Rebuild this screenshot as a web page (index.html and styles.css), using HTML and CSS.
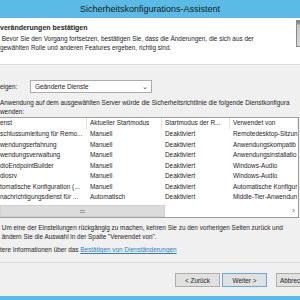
FILE: index.html
```html
<!DOCTYPE html>
<html>
<head>
    <meta charset="UTF-8">
    <title>Sicherheitskonfigurations-Assistent</title>
    <link rel="stylesheet" href="styles.css">
</head>
<body>
    <div class="window">
        <div class="titlebar">Sicherheitskonfigurations-Assistent</div>

        <div class="wizard-header">
            <div class="header-text">
                <h1>veränderungen bestätigen</h1>
                <p>&nbsp;Bevor Sie den Vorgang fortsetzen, bestätigen Sie, dass die Änderungen, die sich aus der<br>gewählten Rolle und anderen Features ergeben, richtig sind.</p>
            </div>
            <div class="header-icon"></div>
        </div>

        <div class="wizard-body">
            <div class="filter-row">
                <label>eigen:</label>
                <div class="combo">
                    <span>Geänderte Dienste</span>
                    <span class="combo-arrow">&#8964;</span>
                </div>
            </div>

            <p class="intro">Anwendung auf dem ausgewählten Server würde die Sicherheitsrichtlinie die folgende Dienstkonfigura<br>wenden:</p>

            <div class="service-table">
                <div class="table-head">
                    <div class="cell">enst</div>
                    <div class="cell">Aktueller Startmodus</div>
                    <div class="cell">Startmodus der R...</div>
                    <div class="cell">Verwendet von</div>
                </div>
                <div class="table-rows">
                    <div class="row">
                        <div class="cell">schlussumleitung für Remo...</div>
                        <div class="cell">Manuell</div>
                        <div class="cell">Deaktiviert</div>
                        <div class="cell">Remotedesktop-Sitzun</div>
                    </div>
                    <div class="row">
                        <div class="cell">wendungserfahrung</div>
                        <div class="cell">Manuell</div>
                        <div class="cell">Deaktiviert</div>
                        <div class="cell">Anwendungskompatib</div>
                    </div>
                    <div class="row">
                        <div class="cell">wendungsverwaltung</div>
                        <div class="cell">Manuell</div>
                        <div class="cell">Deaktiviert</div>
                        <div class="cell">Anwendungsinstallatio</div>
                    </div>
                    <div class="row">
                        <div class="cell">dioEndpointBuilder</div>
                        <div class="cell">Manuell</div>
                        <div class="cell">Deaktiviert</div>
                        <div class="cell">Windows-Audio</div>
                    </div>
                    <div class="row">
                        <div class="cell">diosrv</div>
                        <div class="cell">Manuell</div>
                        <div class="cell">Deaktiviert</div>
                        <div class="cell">Windows-Audio</div>
                    </div>
                    <div class="row">
                        <div class="cell">tomatische Konfiguration (...</div>
                        <div class="cell">Manuell</div>
                        <div class="cell">Deaktiviert</div>
                        <div class="cell">Automatische Konfigur</div>
                    </div>
                    <div class="row">
                        <div class="cell">nachrichtigungsdienst für ...</div>
                        <div class="cell">Automatisch</div>
                        <div class="cell">Deaktiviert</div>
                        <div class="cell">Middle-Tier-Anwendun</div>
                    </div>
                </div>
                <div class="hscroll">
                    <div class="hscroll-thumb"><span class="grip"></span></div>
                    <div class="hscroll-track"></div>
                    <div class="hscroll-arrow">&rsaquo;</div>
                </div>
            </div>

            <p class="note">&nbsp;Um eine der Einstellungen rückgängig zu machen, kehren Sie zu den vorherigen Seiten zurück und<br>&nbsp;ändern Sie die Auswahl in der Spalte "Verwendet von".</p>
            <p class="more">tere Informationen über das <a href="#">Bestätigen von Dienständerungen</a></p>
        </div>

        <div class="wizard-footer">
            <button class="btn">&lt; Zurück</button>
            <button class="btn default">Weiter &gt;</button>
            <button class="btn cancel">Abbrec</button>
        </div>
        <div class="bottom-edge"></div>
    </div>
</body>
</html>
```

FILE: styles.css
```css
:root {
    --accent: #5cbbe6;
    --face: #f0f0f0;
    --line: #dadada;
    --text: #1e1e1e;
}

* {
    margin: 0;
    padding: 0;
    box-sizing: border-box;
}

body {
    width: 300px;
    height: 300px;
    overflow: hidden;
    font-family: "Liberation Sans", Arial, sans-serif;
    font-size: 6.4px;
    color: var(--text);
    background-color: var(--face);
}

.window {
    display: flex;
    flex-direction: column;
    height: 300px;
}

.titlebar {
    height: 18px;
    line-height: 18px;
    background-color: var(--accent);
    text-align: center;
    font-size: 9px;
    color: #1a1a1a;
}

.wizard-header {
    height: 47px;
    display: flex;
    background-color: #ffffff;
    border-bottom: 1px solid var(--line);
    padding-top: 5px;
}

.header-text {
    flex: 1;
    white-space: nowrap;
}

.header-text h1 {
    font-size: 7px;
    font-weight: bold;
    line-height: 9px;
    margin-bottom: 2px;
}

.header-text p {
    line-height: 9px;
}

.header-icon {
    width: 30px;
    height: 27px;
    margin-top: -3px;
    margin-right: -26px;
    background: linear-gradient(to bottom, #7a7a7a 0, #9a9a9a 3px, #c8c8c8 4px, #d8d8d8 100%);
    border: 1px solid #8a8a8a;
}

.wizard-body {
    flex: 1;
    padding-top: 15px;
}

.filter-row {
    display: flex;
    align-items: center;
    height: 13px;
}

.filter-row label {
    width: 30px;
}

.combo {
    width: 122px;
    height: 13px;
    display: flex;
    align-items: center;
    justify-content: space-between;
    padding: 0 3px 0 4px;
    background-color: #ffffff;
    border: 1px solid #acacac;
}

.combo-arrow {
    font-size: 7px;
    line-height: 5px;
    color: #444;
}

.intro {
    margin-top: 5px;
    line-height: 9px;
    white-space: nowrap;
    overflow: hidden;
}

.service-table {
    margin-top: 1px;
    margin-right: 1px;
    background-color: #ffffff;
    border: 1px solid #9c9c9c;
    border-left: none;
}

.table-head,
.row {
    display: grid;
    grid-template-columns: 87px 75px 68px 1fr;
}

.table-head {
    height: 11px;
    line-height: 10px;
}

.table-head .cell {
    border-right: 1px solid #e3e3e3;
}

.table-rows {
    height: 76px;
}

.row {
    height: 10.5px;
    line-height: 10.5px;
}

.cell {
    padding-left: 3px;
    white-space: nowrap;
    overflow: hidden;
}

.table-head .cell:first-child,
.row .cell:first-child {
    padding-left: 0;
}

.hscroll {
    display: flex;
    height: 12px;
    background-color: #f0f0f0;
}

.hscroll-thumb {
    width: 165px;
    display: flex;
    align-items: center;
    justify-content: center;
    background-color: #dcdcdc;
    border: 1px solid #d0d0d0;
}

.grip {
    width: 5px;
    height: 3px;
    border-top: 1px solid #9a9a9a;
    border-bottom: 1px solid #9a9a9a;
}

.hscroll-track {
    flex: 1;
    background-color: #ffffff;
}

.hscroll-arrow {
    width: 9px;
    text-align: center;
    line-height: 12px;
    font-size: 8px;
    color: #606060;
    background-color: #ffffff;
}

.note {
    margin-top: 5px;
    line-height: 9px;
    white-space: nowrap;
}

.more {
    margin-top: 4px;
    line-height: 9px;
    white-space: nowrap;
}

.more a {
    color: #2d7fc4;
}

.wizard-footer {
    height: 34px;
    display: flex;
    align-items: center;
    gap: 2px;
    padding-left: 175px;
    padding-top: 1px;
    border-top: 1px solid var(--line);
}

.btn {
    flex-shrink: 0;
    width: 45px;
    height: 14px;
    font-family: "Liberation Sans", Arial, sans-serif;
    font-size: 6.4px;
    color: var(--text);
    background-color: #e1e1e1;
    border: 1px solid #adadad;
}

.btn.default {
    border-color: #6fa7d8;
    box-shadow: inset 0 0 0 1px #cfe4f6;
}

.btn.cancel {
    margin-left: 7px;
    text-align: left;
    padding-left: 3px;
}

.bottom-edge {
    height: 4px;
    background-color: var(--accent);
}
```
